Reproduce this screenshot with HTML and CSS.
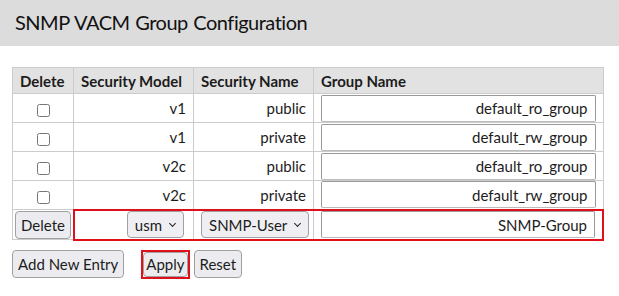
FILE: index.html
```html
<!DOCTYPE html>
<html lang="en">
<head>
    <meta charset="UTF-8">
    <title>SNMP VACM Group Configuration</title>
    <link rel="stylesheet" href="styles.css">
</head>
<body>
    <!-- Page Title -->
    <h1 class="page-title">SNMP VACM Group Configuration</h1>

    <div class="content">
        <table class="config-table">
            <thead>
                <tr>
                    <th class="col-del">Delete</th>
                    <th class="col-model">Security Model</th>
                    <th class="col-name">Security Name</th>
                    <th class="col-group">Group Name</th>
                </tr>
            </thead>
            <tbody>
                <tr>
                    <td class="cell-center"><input type="checkbox"></td>
                    <td>v1</td>
                    <td>public</td>
                    <td><input class="text-input" type="text" value="default_ro_group"></td>
                </tr>
                <tr>
                    <td class="cell-center"><input type="checkbox"></td>
                    <td>v1</td>
                    <td>private</td>
                    <td><input class="text-input" type="text" value="default_rw_group"></td>
                </tr>
                <tr>
                    <td class="cell-center"><input type="checkbox"></td>
                    <td>v2c</td>
                    <td>public</td>
                    <td><input class="text-input" type="text" value="default_ro_group"></td>
                </tr>
                <tr>
                    <td class="cell-center"><input type="checkbox"></td>
                    <td>v2c</td>
                    <td>private</td>
                    <td><input class="text-input" type="text" value="default_rw_group"></td>
                </tr>
                <!-- New entry row -->
                <tr class="new-row">
                    <td class="cell-center cell-btn"><button class="btn">Delete</button></td>
                    <td class="hl hl-first">
                        <span class="select">usm <span class="chev"></span></span>
                    </td>
                    <td class="hl cell-left">
                        <span class="select">SNMP-User <span class="chev"></span></span>
                    </td>
                    <td class="hl hl-last"><input class="text-input" type="text" value="SNMP-Group"></td>
                </tr>
            </tbody>
        </table>

        <div class="actions">
            <button class="btn">Add New Entry</button>
            <span class="hl-box"><button class="btn">Apply</button></span>
            <button class="btn">Reset</button>
        </div>
    </div>
</body>
</html>
```

FILE: styles.css
```css
* {
    margin: 0;
    padding: 0;
    box-sizing: border-box;
}
body {
    font-family: 'Lato', 'Liberation Sans', sans-serif;
    font-size: 15px;
    color: #1c1c1c;
    background: white;
}
/* Title bar */
.page-title {
    background-color: #dcdcdc;
    height: 46px;
    padding: 10px 0 0 15px;
    font-size: 20px;
    letter-spacing: -0.5px;
    word-spacing: 1px;
    font-weight: normal;
    color: #111;
    font-variant-ligatures: none;
}
.content {
    padding: 21px 12px 0 12px;
}
/* Table */
.config-table {
    border-collapse: collapse;
    width: 592px;
    table-layout: fixed;
}
.config-table th,
.config-table td {
    border: 1px solid #cccccc;
    padding: 0 7px;
    text-align: right;
    white-space: nowrap;
}
.config-table th {
    background-color: #e2e2e2;
    text-align: left;
    height: 26px;
    font-weight: bold;
}
.col-del { width: 61px; }
.col-model { width: 120px; }
.col-name { width: 120px; }
.config-table td {
    height: 29px;
}
.config-table .cell-center {
    text-align: center;
}
.config-table .cell-left {
    text-align: left;
}
.config-table input[type="checkbox"] {
    width: 13px;
    height: 13px;
    vertical-align: middle;
}
.text-input {
    display: block;
    width: 100%;
    height: 27px;
    border: 1px solid #999;
    border-bottom-color: #bbb;
    border-radius: 2px;
    padding: 0 7px;
    text-align: right;
    font-family: inherit;
    font-size: 15px;
    color: #1c1c1c;
}
/* New entry row */
.new-row td {
    height: 30px;
}
.config-table .cell-btn {
    padding: 0 2px;
}
.config-table .hl {
    border-top: 2px solid #e0101a;
    border-bottom: 2px solid #e0101a;
}
.config-table .hl-first {
    border-left: 2px solid #e0101a;
    padding-right: 9px;
}
.config-table .hl-last {
    border-right: 2px solid #e0101a;
}
.select {
    display: inline-flex;
    align-items: center;
    gap: 8px;
    height: 27px;
    padding: 0 6px 0 7px;
    border: 1px solid #a0a0a0;
    border-radius: 4px;
    background: #efeff3;
    vertical-align: middle;
}
.chev {
    width: 5px;
    height: 5px;
    border-right: 1.6px solid #222;
    border-bottom: 1.6px solid #222;
    transform: rotate(45deg);
    margin-top: -3px;
    margin-right: 2px;
}
/* Buttons */
.btn {
    font-family: inherit;
    font-size: 15px;
    color: #1c1c1c;
    background-color: #ececf0;
    border: 1px solid #a0a0a0;
    border-radius: 4px;
    height: 28px;
    padding: 0 5px;
    cursor: pointer;
}
.actions {
    display: flex;
    align-items: center;
    gap: 4px;
    margin-top: 9px;
}
.hl-box {
    display: flex;
    border: 2px solid #e0101a;
    margin-left: 13px;
}
.hl-box .btn {
    height: 25px;
    padding: 0 2px;
}
```
